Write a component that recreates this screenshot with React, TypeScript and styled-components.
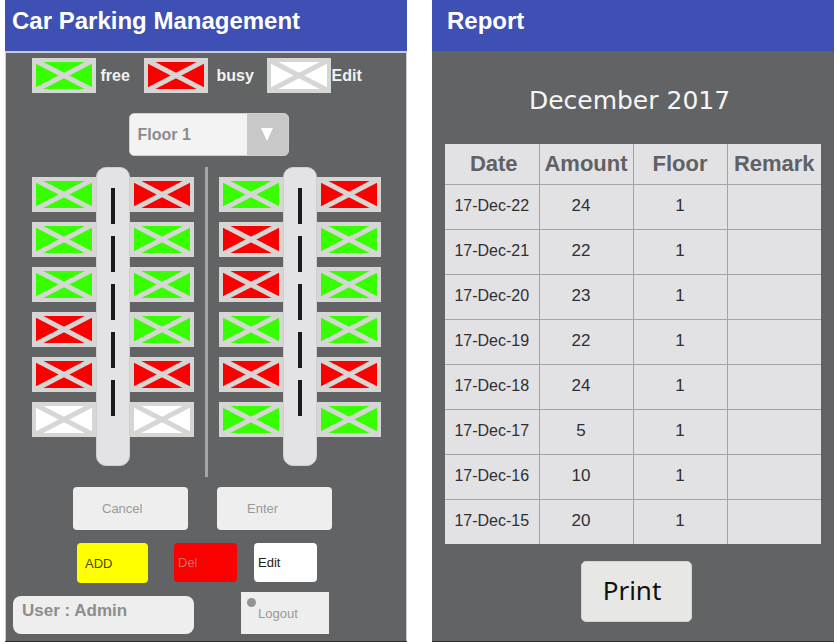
import React from "react";
import styled, { createGlobalStyle } from "styled-components";

const GlobalStyle = createGlobalStyle`
  *, *::before, *::after { box-sizing: border-box; }
  body {
    margin: 0;
    background: #fff;
    font-family: "Liberation Sans", Arial, sans-serif;
  }
`;

type Status = "free" | "busy" | "edit";

const statusFill: Record<Status, string> = {
  free: "#37ff00",
  busy: "#fb0000",
  edit: "#ffffff",
};

const Page = styled.main`
  display: grid;
  grid-template-columns: 1fr 1fr;
  gap: 25px;
  min-height: 100vh;
  padding: 0 5px;
`;

const Panel = styled.section`
  display: flex;
  flex-direction: column;
  background: #616365;
  border-bottom: 1px solid #2e3034;
`;

const TitleBar = styled.header<{ $inset: number }>`
  height: 51px;
  padding: 6px 0 0 ${(p) => p.$inset}px;
  background: #3e50b4;
`;

const Title = styled.h1`
  margin: 0;
  color: #fff;
  font-size: 24px;
  line-height: 30px;
`;

const ParkingBody = styled.div`
  flex: 1;
  display: flex;
  flex-direction: column;
  align-items: center;
  border: 1px solid #c9cbd2;
  border-top-width: 2px;
  border-bottom: 0;
  padding: 5px 0 7px;
`;

const Legend = styled.div`
  display: flex;
  align-items: center;
  width: 349px;
`;

const LegendText = styled.span<{ $width: number; $gap: number }>`
  width: ${(p) => p.$width}px;
  padding-left: ${(p) => p.$gap}px;
  color: #f2f2f2;
  font-size: 16px;
  font-weight: bold;
`;

const StallFrame = styled.span`
  display: block;
  width: 64px;
  height: 35px;
  padding: 4px;
  background: #d6d6d4;
`;

const StallButton = styled.button`
  display: block;
  padding: 0;
  border: 0;
  background: none;
  cursor: pointer;
`;

const StallDrawing = styled.svg`
  display: block;
  width: 56px;
  height: 27px;
`;

const FloorPicker = styled.div`
  display: grid;
  width: 160px;
  height: 43px;
  margin: 20px 0 11px 5px;
`;

const FloorSelect = styled.select`
  grid-area: 1 / 1;
  appearance: none;
  border: 1px solid #d0d0d0;
  border-radius: 5px;
  padding: 0 50px 0 8px;
  background: linear-gradient(to right, #f3f3f3 117px, #c8c8c8 117px);
  color: #8c8c8c;
  font-family: inherit;
  font-size: 16px;
  font-weight: bold;
`;

const FloorArrow = styled.svg`
  grid-area: 1 / 1;
  align-self: center;
  justify-self: end;
  margin-right: 16px;
  width: 12px;
  height: 13px;
  pointer-events: none;
`;

const Lots = styled.div`
  display: flex;
  gap: 11px;
`;

const Divider = styled.div`
  width: 3px;
  background: #a3a5a7;
`;

const Lot = styled.div`
  display: flex;
  align-items: flex-start;
  padding-bottom: 11px;
`;

const StallColumn = styled.div`
  display: flex;
  flex-direction: column;
  gap: 10px;
  padding-top: 10px;
`;

const Lane = styled.div`
  display: flex;
  flex-direction: column;
  align-items: center;
  gap: 12px;
  width: 34px;
  height: 299px;
  padding-top: 20px;
  border: 1px solid #cfcfd1;
  border-radius: 10px;
  background: #e3e3e5;
`;

const Dash = styled.span`
  width: 4px;
  height: 36px;
  background: #1b1b1d;
`;

const ButtonRow = styled.div<{ $gap: number; $top: number; $inset: number }>`
  display: flex;
  align-self: flex-start;
  gap: ${(p) => p.$gap}px;
  padding-left: ${(p) => p.$inset}px;
  margin-top: ${(p) => p.$top}px;
`;

const ButtonPair = styled.div`
  display: flex;
  gap: 17px;
`;

const ActionButton = styled.button<{
  $width: number;
  $height: number;
  $inset: number;
  $fill: string;
  $ink: string;
}>`
  width: ${(p) => p.$width}px;
  height: ${(p) => p.$height}px;
  padding: 0 0 0 ${(p) => p.$inset}px;
  border: 0;
  border-radius: 4px;
  background: ${(p) => p.$fill};
  color: ${(p) => p.$ink};
  font-family: inherit;
  font-size: 13px;
  text-align: left;
  cursor: pointer;
`;

const UserRow = styled.div`
  display: flex;
  align-self: stretch;
  align-items: flex-end;
  gap: 47px;
  margin-top: 9px;
  padding-left: 7px;
`;

const UserName = styled.div`
  width: 181px;
  height: 38px;
  padding: 5px 9px;
  border-radius: 8px;
  background: #eeeeee;
  color: #8d8d8d;
  font-size: 17px;
  font-weight: bold;
  line-height: 20px;
`;

const LogoutButton = styled.button`
  display: flex;
  align-items: flex-start;
  gap: 2px;
  width: 88px;
  height: 42px;
  padding: 6px 0 0 6px;
  border: 0;
  background: #eeeeee;
  color: #999;
  font-family: inherit;
  font-size: 13px;
  cursor: pointer;
`;

const LogoutText = styled.span`
  padding-top: 8px;
`;

const LogoutDot = styled.i`
  width: 9px;
  height: 9px;
  border-radius: 50%;
  background: #929292;
`;

const ReportBody = styled.div`
  flex: 1;
  display: flex;
  flex-direction: column;
  align-items: center;
  padding: 34px 13px 0;
`;

const Month = styled.h2`
  margin: 0 7px 27px 0;
  color: #f6f6f6;
  font: 400 25px/32px "DejaVu Sans", Verdana, sans-serif;
`;

const ReportTable = styled.table`
  width: 100%;
  table-layout: fixed;
  border-collapse: collapse;
  background: #e2e2e4;
  color: #2f2f31;
  text-align: center;

  th, td { padding: 0; border: 1px solid #a2a3a7; }
  th { height: 40px; color: #606164; font-size: 22px; line-height: 24px; }
  th:first-child { padding-left: 4px; }
  td { height: 45px; padding-bottom: 2px; font-size: 17px; }
  td:first-child { font-size: 16px; }
  td:nth-child(2) { padding-right: 10px; }
  tr > :first-child { border-left: 0; }
  tr > :last-child { border-right: 0; }
  tr:last-child > td { border-bottom: 0; }
  thead th { border-top: 0; }
`;

const PrintButton = styled.button`
  width: 111px;
  height: 61px;
  margin: 17px 0 0 6px;
  padding: 0 8px 4px 0;
  border: 1px solid #d2d3d2;
  border-radius: 5px;
  background: #e7e8e6;
  color: #101010;
  font-family: "Noto Sans", sans-serif;
  font-size: 26px;
  cursor: pointer;
`;

function StallMark({ status }: { status: Status }) {
  return (
    <StallFrame>
      <StallDrawing viewBox="0 0 56 27" aria-hidden="true">
        <rect width="56" height="27" fill={statusFill[status]} />
        <path d="M0 -1 56 28M56 -1 0 28" stroke="#d6d6d4" strokeWidth="5" />
      </StallDrawing>
    </StallFrame>
  );
}

function Stalls({ items, name }: { items: Status[]; name: string }) {
  return (
    <StallColumn>
      {items.map((status, i) => (
        <StallButton key={i} type="button" aria-label={`${name}${i + 1} ${status}`}>
          <StallMark status={status} />
        </StallButton>
      ))}
    </StallColumn>
  );
}

function ParkingLot({ left, right, names }: { left: Status[]; right: Status[]; names: [string, string] }) {
  return (
    <Lot>
      <Stalls items={left} name={names[0]} />
      <Lane>
        {[0, 1, 2, 3, 4].map((n) => (
          <Dash key={n} />
        ))}
      </Lane>
      <Stalls items={right} name={names[1]} />
    </Lot>
  );
}

const columns: Status[][] = [
  ["free", "free", "free", "busy", "busy", "edit"],
  ["busy", "free", "free", "free", "busy", "edit"],
  ["free", "busy", "busy", "free", "busy", "free"],
  ["busy", "free", "free", "free", "busy", "free"],
];

const records: [string, number, number][] = [
  ["17-Dec-22", 24, 1],
  ["17-Dec-21", 22, 1],
  ["17-Dec-20", 23, 1],
  ["17-Dec-19", 22, 1],
  ["17-Dec-18", 24, 1],
  ["17-Dec-17", 5, 1],
  ["17-Dec-16", 10, 1],
  ["17-Dec-15", 20, 1],
];

export default function App() {
  return (
    <>
      <GlobalStyle />
      <Page>
        <Panel>
          <TitleBar $inset={7}>
            <Title>Car Parking Management</Title>
          </TitleBar>
          <ParkingBody>
            <Legend>
              <StallMark status="free" />
              <LegendText $width={48} $gap={5}>free</LegendText>
              <StallMark status="busy" />
              <LegendText $width={59} $gap={9}>busy</LegendText>
              <StallMark status="edit" />
              <LegendText $width={40} $gap={1}>Edit</LegendText>
            </Legend>
            <FloorPicker>
              <FloorSelect aria-label="Floor" defaultValue="1">
                <option value="1">Floor 1</option>
                <option value="2">Floor 2</option>
              </FloorSelect>
              <FloorArrow viewBox="0 0 12 13" aria-hidden="true">
                <path d="M0 0h12L6 13z" fill="#fff" />
              </FloorArrow>
            </FloorPicker>
            <Lots>
              <ParkingLot left={columns[0]} right={columns[1]} names={["A", "B"]} />
              <Divider />
              <ParkingLot left={columns[2]} right={columns[3]} names={["C", "D"]} />
            </Lots>
            <ButtonRow $gap={29} $top={10} $inset={67}>
              <ActionButton type="button" $width={115} $height={43} $inset={29} $fill="#eeeeee" $ink="#999">
                Cancel
              </ActionButton>
              <ActionButton type="button" $width={115} $height={43} $inset={30} $fill="#eeeeee" $ink="#999">
                Enter
              </ActionButton>
            </ButtonRow>
            <ButtonRow $gap={26} $top={13} $inset={71}>
              <ActionButton type="button" $width={71} $height={40} $inset={8} $fill="#ffff00" $ink="#4a4a10">
                ADD
              </ActionButton>
              <ButtonPair>
                <ActionButton type="button" $width={63} $height={39} $inset={4} $fill="#fb0000" $ink="#c87070">
                  Del
                </ActionButton>
                <ActionButton type="button" $width={63} $height={39} $inset={4} $fill="#ffffff" $ink="#222">
                  Edit
                </ActionButton>
              </ButtonPair>
            </ButtonRow>
            <UserRow>
              <UserName>User : Admin</UserName>
              <LogoutButton type="button">
                <LogoutDot />
                <LogoutText>Logout</LogoutText>
              </LogoutButton>
            </UserRow>
          </ParkingBody>
        </Panel>
        <Panel>
          <TitleBar $inset={15}>
            <Title>Report</Title>
          </TitleBar>
          <ReportBody>
            <Month>December 2017</Month>
            <ReportTable>
              <thead>
                <tr>
                  <th scope="col">Date</th>
                  <th scope="col">Amount</th>
                  <th scope="col">Floor</th>
                  <th scope="col">Remark</th>
                </tr>
              </thead>
              <tbody>
                {records.map(([date, amount, floor]) => (
                  <tr key={date}>
                    <td>{date}</td>
                    <td>{amount}</td>
                    <td>{floor}</td>
                    <td />
                  </tr>
                ))}
              </tbody>
            </ReportTable>
            <PrintButton type="button">Print</PrintButton>
          </ReportBody>
        </Panel>
      </Page>
    </>
  );
}
